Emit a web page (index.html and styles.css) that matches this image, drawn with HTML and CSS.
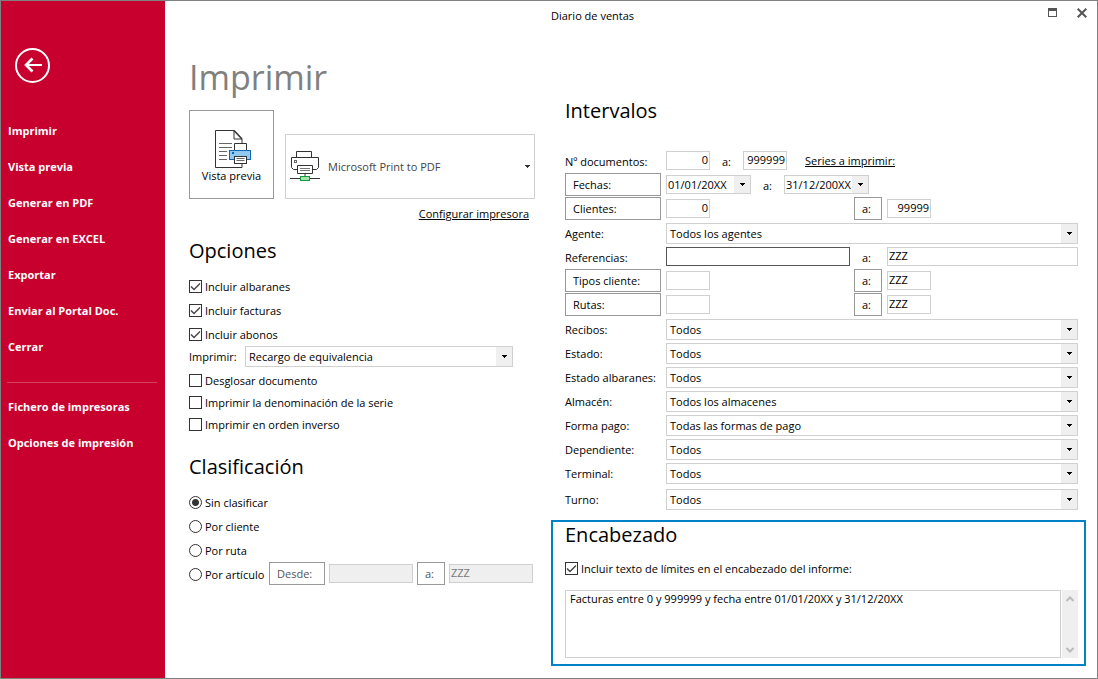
FILE: index.html
```html
<!DOCTYPE html>
<html lang="es">
<head>
<meta charset="utf-8">
<meta name="viewport" content="width=device-width, initial-scale=1">
<title>Diario de ventas</title>
<link rel="stylesheet" href="styles.css">
</head>
<body>
<div class="window">
  <nav class="sidebar" aria-label="Menú">
    <button class="back" type="button" aria-label="Volver">
      <svg width="35" height="35" viewBox="0 0 35 35" fill="none" stroke="#fff">
        <circle cx="17.500" cy="17.500" r="16.500" stroke-width="2"/>
        <path d="M10.500 17H27" stroke-width="2"/>
        <path d="M17.500 10.500L11 17l6.500 6.500" stroke-width="2.600"/>
      </svg>
    </button>
    <a class="nav-item" href="#">Imprimir</a>
    <a class="nav-item" href="#">Vista previa</a>
    <a class="nav-item" href="#">Generar en PDF</a>
    <a class="nav-item" href="#">Generar en EXCEL</a>
    <a class="nav-item" href="#">Exportar</a>
    <a class="nav-item" href="#">Enviar al Portal Doc.</a>
    <a class="nav-item" href="#">Cerrar</a>
    <hr class="nav-line">
    <a class="nav-item" href="#">Fichero de impresoras</a>
    <a class="nav-item" href="#">Opciones de impresión</a>
  </nav>

  <div class="content">
    <header class="titlebar">
      <span class="caption">Diario de ventas</span>
      <div class="window-buttons">
        <button class="plain" type="button" aria-label="Maximizar">
          <svg width="9" height="9" viewBox="0 0 9 9" fill="#555" shape-rendering="crispEdges"><path d="M0 0h9v9H0zM1 3v5h7V3z" fill-rule="evenodd"/></svg>
        </button>
        <button class="plain" type="button" aria-label="Cerrar ventana">
          <svg width="10" height="10" viewBox="0 0 10 10" stroke="#555" stroke-width="2"><path d="M.7.7l8.600 8.600M9.300.7L.7 9.300"/></svg>
        </button>
      </div>
    </header>

    <main class="columns">
      <div class="left">
        <h1>Imprimir</h1>
        <div class="printer-row">
          <button class="preview" type="button">
            <svg width="41" height="39" viewBox="-4 0 41 39" fill="none" stroke-width="1">
              <path d="M19 .5H.5v37H27V34M27 9v4.500" stroke="#333"/>
              <path d="M19 .5v8.500h8" stroke="#333"/><path d="M19 .5l8 8.500" stroke="#333" stroke-width="1.600"/>
              <path d="M4 13.500h13M4 17.500h13M4 21.500h8M4 25.500h8M4 29.500h8" stroke="#666"/>
              <path d="M19.500 20.500v-7h12v7" stroke="#333" fill="#fff"/>
              <rect x="14.500" y="20.500" width="21" height="9" fill="#91c9f0" stroke="#0f66b3"/>
              <path d="M17 22h2v2h-2z" fill="#0f66b3"/>
              <rect x="19.500" y="26.500" width="12" height="7" fill="#fff" stroke="#333"/>
              <path d="M21.500 28.500h8M21.500 30.500h8" stroke="#666"/>
            </svg>
            <span>Vista previa</span>
          </button>
          <div class="printer">
            <svg width="30" height="31" viewBox="0 0 30 31" fill="none" stroke="#333">
              <path d="M6.500 6.500v-6h15v6"/>
              <path d="M7.500 18.500h-4l-2-2v-10h27v10l-2 2h-4"/>
              <rect x="4.500" y="9.500" width="2" height="2" stroke="#666"/>
              <path d="M7.500 14.500h15v8h-15z" fill="#fff"/>
              <path d="M10 17.500h10M10 19.500h10" stroke="#777"/>
              <path d="M15 23v2" stroke="#999" stroke-width="2"/>
              <path d="M0 27.500h30"/>
              <rect x="10.500" y="25.500" width="9" height="4" fill="#a9e0ae" stroke="#0c9a3c"/>
            </svg>
            <select aria-label="Impresora"><option>Microsoft Print to PDF</option></select>
          </div>
        </div>
        <div class="configure"><a href="#">Configurar impresora</a></div>

        <h2>Opciones</h2>
        <div class="checks wide">
          <label class="choice"><input type="checkbox" checked>Incluir albaranes</label>
          <label class="choice"><input type="checkbox" checked>Incluir facturas</label>
          <label class="choice"><input type="checkbox" checked>Incluir abonos</label>
        </div>
        <div class="print-kind">
          <label for="kind">Imprimir:</label>
          <select id="kind" class="combo"><option>Recargo de equivalencia</option></select>
        </div>
        <div class="checks">
          <label class="choice"><input type="checkbox">Desglosar documento</label>
          <label class="choice"><input type="checkbox">Imprimir la denominación de la serie</label>
          <label class="choice"><input type="checkbox">Imprimir en orden inverso</label>
        </div>

        <h2 class="sort-title">Clasificación</h2>
        <div class="checks wide">
          <label class="choice"><input type="radio" name="sort" checked>Sin clasificar</label>
          <label class="choice"><input type="radio" name="sort">Por cliente</label>
          <label class="choice"><input type="radio" name="sort">Por ruta</label>
        </div>
        <div class="article">
          <label class="choice"><input type="radio" name="sort">Por artículo</label>
          <button class="btn" type="button" disabled>Desde:</button>
          <input class="field" type="text" aria-label="Desde artículo" disabled>
          <button class="btn to" type="button" disabled>a:</button>
          <input class="field" type="text" value="ZZZ" aria-label="Hasta artículo" disabled>
        </div>
      </div>

      <div class="right">
        <section class="ranges">
          <h2>Intervalos</h2>
          <div class="row">
            <label for="doc">Nº documentos:</label>
            <div class="inline docs">
              <input id="doc" class="field short number" type="text" value="0">
              <span class="sep">a:</span>
              <input class="field short number" type="text" value="999999" aria-label="Hasta documento">
              <a class="series" href="#">Series a imprimir:</a>
            </div>
          </div>
          <div class="row">
            <button class="btn" type="button">Fechas:</button>
            <div class="inline dates">
              <select class="combo date" aria-label="Desde fecha"><option>01/01/20XX</option></select>
              <span class="sep">a:</span>
              <select class="combo date" aria-label="Hasta fecha"><option>31/12/200XX</option></select>
            </div>
          </div>
          <div class="row">
            <button class="btn" type="button">Clientes:</button>
            <div class="span">
              <input class="field short number" type="text" value="0" aria-label="Desde cliente">
              <button class="btn to" type="button">a:</button>
              <input class="field short number" type="text" value="99999" aria-label="Hasta cliente">
            </div>
          </div>
          <div class="row"><label for="agent">Agente:</label><select id="agent" class="combo"><option>Todos los agentes</option></select></div>
          <div class="row">
            <label for="ref">Referencias:</label>
            <div class="span">
              <input id="ref" class="field current" type="text">
              <span class="sep">a:</span>
              <input class="field" type="text" value="ZZZ" aria-label="Hasta referencia">
            </div>
          </div>
          <div class="row">
            <button class="btn" type="button">Tipos cliente:</button>
            <div class="span">
              <input class="field short" type="text" aria-label="Desde tipo cliente">
              <button class="btn to" type="button">a:</button>
              <input class="field short" type="text" value="ZZZ" aria-label="Hasta tipo cliente">
            </div>
          </div>
          <div class="row">
            <button class="btn" type="button">Rutas:</button>
            <div class="span">
              <input class="field short" type="text" aria-label="Desde ruta">
              <button class="btn to" type="button">a:</button>
              <input class="field short" type="text" value="ZZZ" aria-label="Hasta ruta">
            </div>
          </div>
          <div class="row"><label for="rec">Recibos:</label><select id="rec" class="combo"><option>Todos</option></select></div>
          <div class="row"><label for="est">Estado:</label><select id="est" class="combo"><option>Todos</option></select></div>
          <div class="row"><label for="alb">Estado albaranes:</label><select id="alb" class="combo"><option>Todos</option></select></div>
          <div class="row"><label for="alm">Almacén:</label><select id="alm" class="combo"><option>Todos los almacenes</option></select></div>
          <div class="row"><label for="pay">Forma pago:</label><select id="pay" class="combo"><option>Todas las formas de pago</option></select></div>
          <div class="row"><label for="dep">Dependiente:</label><select id="dep" class="combo"><option>Todos</option></select></div>
          <div class="row"><label for="ter">Terminal:</label><select id="ter" class="combo"><option>Todos</option></select></div>
          <div class="row last"><label for="tur">Turno:</label><select id="tur" class="combo"><option>Todos</option></select></div>
        </section>

        <section class="heading-box">
          <h2>Encabezado</h2>
          <label class="choice"><input type="checkbox" checked>Incluir texto de límites en el encabezado del informe:</label>
          <div class="memo">
            <textarea aria-label="Texto del encabezado">Facturas entre 0 y 999999 y fecha entre 01/01/20XX y 31/12/20XX</textarea>
            <div class="scroll">
              <button class="plain" type="button" aria-label="Subir"><svg width="8" height="6" viewBox="0 0 8 6" fill="none" stroke="#bbb" stroke-width="2"><path d="M.5 5L4 1.500 7.500 5"/></svg></button>
              <button class="plain" type="button" aria-label="Bajar"><svg width="8" height="6" viewBox="0 0 8 6" fill="none" stroke="#bbb" stroke-width="2"><path d="M.5 1L4 4.500 7.500 1"/></svg></button>
            </div>
          </div>
        </section>
      </div>
    </main>
  </div>
</div>
</body>
</html>
```
FILE: styles.css
```css
* { box-sizing: border-box; }

body {
  margin: 0;
  background: #fff;
  color: #000;
  font: 11px/14px "Open Sans", "Noto Sans", sans-serif;
}

button, input, select, textarea {
  margin: 0;
  border-radius: 0;
  color: inherit;
  font: inherit;
  outline: none;
}

a { color: inherit; }

h1, h2 { margin: 0; font-weight: 400; }
h1 { color: #808080; font-size: 34px; line-height: 48px; }
h2 { font-size: 20px; line-height: 28px; }

.window {
  display: flex;
  min-height: 100vh;
  border: 1px solid #808080;
}

/* Sidebar */
.sidebar {
  display: flex;
  flex-direction: column;
  flex: 0 0 164px;
  padding: 47px 7px 0;
  background: #c8002d;
  color: #fff;
}
.back {
  display: block;
  width: 35px;
  height: 35px;
  margin: 0 0 30px 7px;
  padding: 0;
  border: 0;
  background: none;
}
.back svg, .plain svg { display: block; }
.nav-item {
  font-weight: 700;
  line-height: 36px;
  text-decoration: none;
}
.nav-line {
  width: 150px;
  margin: 17px 0 6px -1px;
  border: 0;
  border-top: 1px solid #d4405f;
}

/* Title bar */
.content { display: flex; flex: 1; flex-direction: column; min-width: 0; }
.titlebar {
  display: flex;
  justify-content: space-between;
  height: 32px;
  padding: 7px 10px 0 386px;
}
.caption { line-height: 16px; }
.window-buttons { display: flex; gap: 20px; align-items: flex-start; }
.plain { padding: 0; border: 0; background: none; }

/* Columns */
.columns {
  display: grid;
  grid-template-columns: 350px minmax(0, 1fr);
  gap: 12px;
  padding: 0 11px 12px 24px;
}
.left { padding-top: 20px; }

.printer-row { display: flex; gap: 11px; align-items: flex-end; margin-top: 9px; }
.preview {
  display: flex;
  flex-direction: column;
  align-items: center;
  width: 85px;
  height: 89px;
  padding: 19px 0 0;
  border: 1px solid #999;
  background: #fff;
}
.printer {
  display: flex;
  align-items: center;
  width: 250px;
  height: 65px;
  padding: 0 0 0 4px;
  border: 1px solid #d0d0d0;
}
.printer select {
  flex: 1;
  height: 61px;
  padding: 0 20px 0 8px;
  border: 0;
  appearance: none;
  color: #444;
  background: url("data:image/svg+xml,%3Csvg xmlns='http://www.w3.org/2000/svg' width='5' height='3' shape-rendering='crispEdges'%3E%3Cpath d='M0 0h5v1H4v1H3v1H2V2H1V1H0z' fill='%23333'/%3E%3C/svg%3E") no-repeat right 4px center #fff;
}
.configure {
  margin: 7px 0 15px;
  padding-right: 10px;
  text-align: right;
  line-height: 16px;
}

/* Checkboxes and radios */
.checks { display: flex; flex-direction: column; gap: 8px; align-items: flex-start; }
.checks.wide { gap: 10px; margin-top: 15px; }
.choice { display: flex; gap: 3px; align-items: flex-start; height: 14px; white-space: nowrap; }
.choice input {
  flex: none;
  width: 13px;
  height: 13px;
  border: 1px solid #333;
  appearance: none;
  background: #fff;
}
.choice input[type="checkbox"]:checked {
  background: url("data:image/svg+xml,%3Csvg xmlns='http://www.w3.org/2000/svg' width='11' height='11'%3E%3Cpath d='M1 5.500l3 3L10 2.500' fill='none' stroke='%23444' stroke-width='1.400'/%3E%3C/svg%3E") no-repeat center;
}
.choice input[type="radio"] { border-radius: 50%; }
.choice input[type="radio"]:checked { background: radial-gradient(circle, #333 3px, #fff 4px); }

.print-kind { display: flex; align-items: center; margin: 4px 0 7px; }
.print-kind label { width: 56px; }
.print-kind .combo { width: 268px; }

.sort-title { margin-top: 21px; }

.article { display: flex; gap: 4px; align-items: flex-start; margin-top: 4px; }
.article .choice { width: 76px; height: 25px; align-items: center; }
.article .btn { width: 56px; }
.article .field { width: 84px; margin-top: 2px; }

/* Form controls */
.btn {
  width: 100%;
  height: 23px;
  padding: 0 7px;
  border: 1px solid #999;
  background: #fff;
  text-align: left;
}
.btn.to, .article .btn.to { width: 28px; }
.btn:disabled { color: #555; }

.field {
  width: 100%;
  min-width: 0;
  height: 19px;
  padding: 0 1px 2px;
  border: 1px solid #d0d0d0;
  background: #fff;
}
.field:disabled { background: #efefef; color: #777; }
.field.short { width: 44px; }
.field.number { text-align: right; }
.field.current { border-color: #555; }

.combo {
  width: 100%;
  height: 21px;
  padding: 0 20px 0 3px;
  border: 1px solid #d0d0d0;
  appearance: none;
  background:
    url("data:image/svg+xml,%3Csvg xmlns='http://www.w3.org/2000/svg' width='5' height='3' shape-rendering='crispEdges'%3E%3Cpath d='M0 0h5v1H4v1H3v1H2V2H1V1H0z'/%3E%3C/svg%3E") no-repeat right 5px center,
    linear-gradient(#efefef, #efefef) no-repeat right / 16px 100%,
    #fff;
}
.combo.date { width: 85px; height: 19px; padding: 0 16px 0 1px; }

/* Ranges */
.right { padding-top: 64px; }
.ranges { padding: 0 8px 0 14px; }
.ranges h2 { margin-bottom: 24px; }
.row {
  display: grid;
  grid-template-columns: 96px minmax(0, 1fr);
  column-gap: 5px;
  align-items: start;
  height: 24px;
}
.row > label { line-height: 25px; white-space: nowrap; }
.row > .combo { margin-top: 2px; }
.row.last { margin-top: 2px; }
.sep { line-height: 25px; }

.inline { display: flex; align-items: flex-start; }
.inline .field, .inline .combo, .span .field { margin-top: 2px; }
.inline .sep { width: 33px; padding-left: 12px; }
.series { margin-left: 18px; line-height: 23px; }

.span {
  display: grid;
  grid-template-columns: 184px 29px minmax(0, 1fr);
  column-gap: 4px;
  align-items: start;
}
.span .sep { padding-left: 8px; }

/* Report heading */
.heading-box {
  margin-top: 9px;
  padding: 0 6px 6px 12px;
  border: 2px solid #0082c8;
}
.heading-box h2 { line-height: 26px; }
.heading-box .choice { margin-top: 14px; }
.memo { display: flex; gap: 1px; height: 68px; margin-top: 14px; }
.memo textarea {
  flex: 1;
  min-width: 0;
  padding: 1px 4px;
  border: 1px solid #d0d0d0;
  resize: none;
}
.scroll {
  display: flex;
  flex-direction: column;
  justify-content: space-between;
  align-items: center;
  width: 16px;
  padding: 6px 0 5px;
  background: #efefef;
}
```
